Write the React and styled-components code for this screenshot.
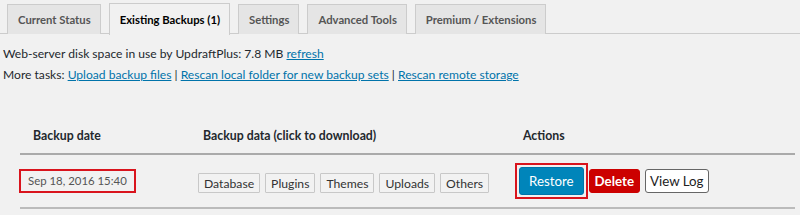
import styled, { createGlobalStyle } from 'styled-components';

const GlobalStyle = createGlobalStyle`
  body {
    margin: 0;
    background: #f1f1f1;
    font-family: Lato, "Open Sans", sans-serif;
    color: #23282d;
  }
`;

const tabs = ['Current Status', 'Existing Backups (1)', 'Settings', 'Advanced Tools', 'Premium / Extensions'];
const entities = ['Database', 'Plugins', 'Themes', 'Uploads', 'Others'];

const App = () => (
  <>
    <GlobalStyle />
    <Page>
      <TabBar>
        {tabs.map((t, i) => (
          <Tab key={t} $active={i === 1}>{t}</Tab>
        ))}
      </TabBar>
      <Info>
        <p>
          Web-server disk space in use by UpdraftPlus: 7.8 MB <a href="#">refresh</a>
        </p>
        <p>
          More tasks: <a href="#">Upload backup files</a> | <a href="#">Rescan local folder for new backup sets</a> |{' '}
          <a href="#">Rescan remote storage</a>
        </p>
      </Info>
      <Table>
        <HeadRow>
          <HeadCell>Backup date</HeadCell>
          <HeadCell>Backup data (click to download)</HeadCell>
          <HeadCell>Actions</HeadCell>
        </HeadRow>
        <Row>
          <Cell>
            <DateBox>Sep 18, 2016 15:40</DateBox>
          </Cell>
          <Cell>
            <Downloads>
              {entities.map((e) => (
                <DataButton key={e}>{e}</DataButton>
              ))}
            </Downloads>
          </Cell>
          <Cell>
            <Actions>
              <Highlight>
                <ActionButton $kind="restore">Restore</ActionButton>
              </Highlight>
              <ActionButton $kind="delete">Delete</ActionButton>
              <ActionButton $kind="log">View Log</ActionButton>
            </Actions>
          </Cell>
        </Row>
      </Table>
    </Page>
  </>
);

const Page = styled.div`
  width: 800px;
  height: 215px;
  overflow: hidden;
`;

const TabBar = styled.div`
  display: flex;
  gap: 8px;
  padding: 3px 0 0 7px;
  border-bottom: 1px solid #ccc;
  height: 30px;
  box-sizing: content-box;
`;

const Tab = styled.div`
  height: ${(p) => (p.$active ? '31px' : '29px')};
  margin-top: ${(p) => (p.$active ? '0' : '1px')};
  padding: 0 9px 0 10px;
  display: flex;
  align-items: center;
  font-size: 11.3px;
  font-weight: 700;
  color: ${(p) => (p.$active ? '#000' : '#555')};
  background: ${(p) => (p.$active ? '#f1f1f1' : '#e5e5e5')};
  border: 1px solid #ccc;
  border-bottom: none;
  white-space: nowrap;
`;

const Info = styled.div`
  padding: 9px 0 0 3px;
  font-size: 12.1px;

  p {
    margin: 0;
    line-height: 21px;
  }

  a {
    color: #0073aa;
    text-decoration: underline;
  }
`;

const Table = styled.div`
  margin: 35px 5px 0 20px;
`;

const HeadRow = styled.div`
  display: grid;
  grid-template-columns: 170px 320px 1fr;
  height: 33px;
  border-bottom: 2px solid #aaa;
`;

const HeadCell = styled.div`
  padding-left: 13px;
  font-size: 12.3px;
  font-weight: 700;
  line-height: 32px;
`;

const Row = styled.div`
  display: grid;
  grid-template-columns: 170px 320px 1fr;
  align-items: center;
  height: 52px;
  border-bottom: 2px solid #bbb;
`;

const Cell = styled.div`
  display: flex;
  align-items: center;
`;

const DateBox = styled.span`
  margin-left: -1px;
  padding: 0 7px;
  height: 20px;
  line-height: 20px;
  border: 2px solid #d9141d;
  font-size: 11.4px;
  color: #555;
  white-space: nowrap;
`;

const Downloads = styled.div`
  display: flex;
  gap: 5px;
  margin-left: 8px;
  margin-top: 4px;
`;

const DataButton = styled.button`
  height: 20px;
  padding: 0 5px;
  font-family: inherit;
  font-size: 12.2px;
  color: #333;
  background: #f2f2f2;
  border: 1px solid #c8c8c8;
  border-radius: 1px;
`;

const Actions = styled.div`
  display: flex;
  align-items: center;
  gap: 1px;
  margin-left: 5px;
`;

const Highlight = styled.div`
  border: 2px solid #d9141d;
  padding: 2px;
  display: flex;
`;

const kinds = {
  restore: { bg: '#0085ba', color: '#fff', border: '#0073aa', h: '28px', gap: '0', pad: '9px', weight: 400 },
  delete: { bg: '#c00', color: '#fff', border: '#c00', h: '24px', gap: '0', pad: '5px', weight: 700 },
  log: { bg: '#fff', color: '#222', border: '#666', h: '24px', gap: '4px', pad: '4px', weight: 400 },
};

const ActionButton = styled.button`
  height: ${(p) => kinds[p.$kind].h};
  margin-left: ${(p) => kinds[p.$kind].gap};
  padding: 0 ${(p) => kinds[p.$kind].pad};
  font-family: inherit;
  font-size: 13.3px;
  font-weight: ${(p) => kinds[p.$kind].weight};
  color: ${(p) => kinds[p.$kind].color};
  background: ${(p) => kinds[p.$kind].bg};
  border: 1px solid ${(p) => kinds[p.$kind].border};
  border-radius: 3px;
`;

export default App;
